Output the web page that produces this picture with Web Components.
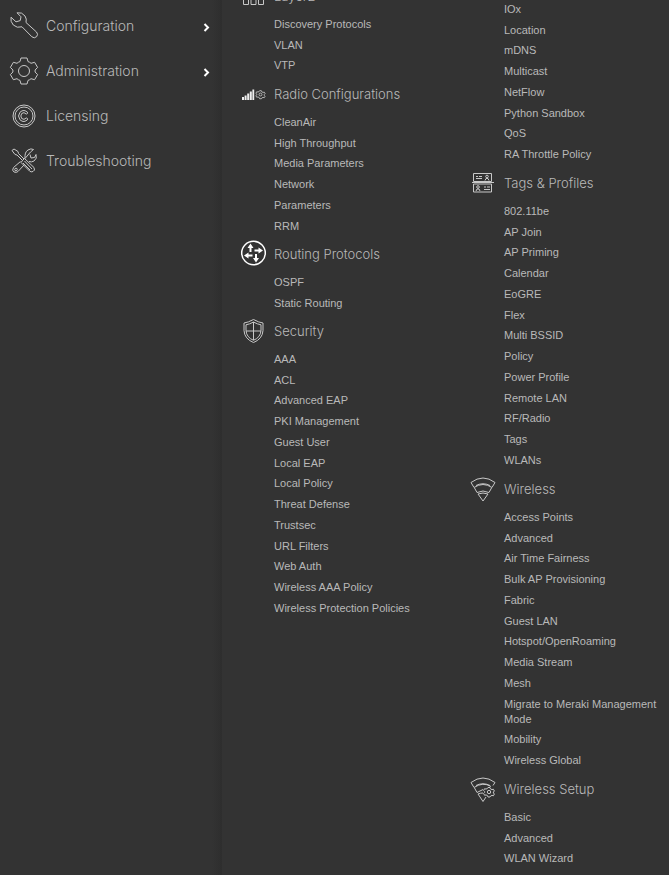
<!DOCTYPE html>
<html lang="en">
<head>
<meta charset="utf-8">
<meta name="viewport" content="width=device-width, initial-scale=1">
<title>Configuration menu</title>
<style>
body{margin:0;background:#333;color:#b9b9b9;font-family:Inter,"Liberation Sans",sans-serif;font-weight:300}
</style>
</head>
<body>
<menu-shell>
  <side-item slot="side" icon="wrench" expandable>Configuration</side-item>
  <side-item slot="side" icon="gear" expandable>Administration</side-item>
  <side-item slot="side" icon="copyright">Licensing</side-item>
  <side-item slot="side" icon="tools">Troubleshooting</side-item>

  <menu-column slot="columns" class="scrolled">
    <menu-group icon="layers" label="Layer2">
      <menu-link>Discovery Protocols</menu-link><menu-link>VLAN</menu-link><menu-link>VTP</menu-link>
    </menu-group>
    <menu-group icon="radio" label="Radio Configurations">
      <menu-link>CleanAir</menu-link><menu-link>High Throughput</menu-link><menu-link>Media Parameters</menu-link><menu-link>Network</menu-link><menu-link>Parameters</menu-link><menu-link>RRM</menu-link>
    </menu-group>
    <menu-group icon="routing" label="Routing Protocols">
      <menu-link>OSPF</menu-link><menu-link>Static Routing</menu-link>
    </menu-group>
    <menu-group icon="shield" label="Security">
      <menu-link>AAA</menu-link><menu-link>ACL</menu-link><menu-link>Advanced EAP</menu-link><menu-link>PKI Management</menu-link><menu-link>Guest User</menu-link><menu-link>Local EAP</menu-link><menu-link>Local Policy</menu-link><menu-link>Threat Defense</menu-link><menu-link>Trustsec</menu-link><menu-link>URL Filters</menu-link><menu-link>Web Auth</menu-link><menu-link>Wireless AAA Policy</menu-link><menu-link>Wireless Protection Policies</menu-link>
    </menu-group>
  </menu-column>

  <menu-column slot="columns">
    <menu-group>
      <menu-link>IOx</menu-link><menu-link>Location</menu-link><menu-link>mDNS</menu-link><menu-link>Multicast</menu-link><menu-link>NetFlow</menu-link><menu-link>Python Sandbox</menu-link><menu-link>QoS</menu-link><menu-link>RA Throttle Policy</menu-link>
    </menu-group>
    <menu-group icon="tags" label="Tags &amp; Profiles">
      <menu-link>802.11be</menu-link><menu-link>AP Join</menu-link><menu-link>AP Priming</menu-link><menu-link>Calendar</menu-link><menu-link>EoGRE</menu-link><menu-link>Flex</menu-link><menu-link>Multi BSSID</menu-link><menu-link>Policy</menu-link><menu-link>Power Profile</menu-link><menu-link>Remote LAN</menu-link><menu-link>RF/Radio</menu-link><menu-link>Tags</menu-link><menu-link>WLANs</menu-link>
    </menu-group>
    <menu-group icon="wireless" label="Wireless">
      <menu-link>Access Points</menu-link><menu-link>Advanced</menu-link><menu-link>Air Time Fairness</menu-link><menu-link>Bulk AP Provisioning</menu-link><menu-link>Fabric</menu-link><menu-link>Guest LAN</menu-link><menu-link>Hotspot/OpenRoaming</menu-link><menu-link>Media Stream</menu-link><menu-link>Mesh</menu-link><menu-link>Migrate to Meraki Management Mode</menu-link><menu-link>Mobility</menu-link><menu-link>Wireless Global</menu-link>
    </menu-group>
    <menu-group icon="setup" label="Wireless Setup">
      <menu-link>Basic</menu-link><menu-link>Advanced</menu-link><menu-link>WLAN Wizard</menu-link>
    </menu-group>
  </menu-column>
</menu-shell>

<script>
const smallGear = (x, y, s = 1) => `<g transform="translate(${x} ${y}) scale(${s})"><path d="M-1-4.5h2l.5 1.4 1.5.7 1.4-.4 1 1.8-1 1 0 1 1 1-1 1.8-1.4-.4-1.5.7L1 5h-2l-.5-1.4-1.5-.7-1.4.4-1-1.8 1-1V-.5l-1-1 1-1.8 1.4.4 1.500-.7Z"/><circle r="1.700"/></g>`;
const ICONS = {
  wrench: '<path d="M7 .8Q12-.2 15 4q2 3 1 6.500l10.500 9.500q2 2.300.2 4.600-2.400 2.300-4.800.2L12 14.800Q7 16.500 3.300 13 .1 9.500 1 5.200L6 9.800 10.200 8.600 11 4.800Z"/>',
  gear: '<path d="M11 1h6l1 3.600q1.800.5 3 1.700l3.600-1 3 5.100-2.500 2.600v2l2.500 2.600-3 5.100-3.600-1q-1.200 1.200-3 1.700L17 27h-6l-1-3.600q-1.800-.5-3-1.700l-3.600 1-3-5.100 2.500-2.600v-2L.400 10.400l3-5.100 3.600 1q1.200-1.200 3-1.700Z"/><circle cx="14" cy="14" r="5.500"/>',
  copyright: '<circle cx="14" cy="14" r="11"/><circle cx="14" cy="14" r="9"/><path d="M18 10.800Q14 6.500 10 10.200 7 14 10 17.800 14 21.500 18 17.200L16.300 15.900Q14 18.500 11.700 16.500 10 14 11.700 11.500 14 9.500 16.300 12.100Z"/>',
  tools: '<path d="M2 3.500L4 2l4 2.500.500 2L14 12l-1.500 1.500L7 8l-2-.500ZM12.500 13.500l2-2 9.500 9q1.500 3-1 4-2 1-3.500-.5L11 15.500ZM14.500 14l7.500 8M13 16l7 7M20 7.500l1 3.500 3.500-.5 1.500-3q1.500 4-2 6.500-2.500 1.500-5 .5M15 11.500Q14.500 5 18 3q3-2 5.500-.5L20.500 5ZM10.500 14.500L3.500 20.500q-2 3 .5 4.500 2.500 1 4-.5l6-6.500"/><circle cx="6" cy="22.500" r="1.300"/>',
  layers: '<path d="M4.500 17.500h5v5h-5ZM12 17.500h5v5h-5ZM19.500 17.500h5v5h-5ZM14.500 17.500V12M7 17.500V14h15v3.500"/>',
  radio: `<g stroke="none" fill="#eee"><path d="M3 17h2v3H3ZM5.600 15.500h2V20h-2ZM8.200 13.500h2V20h-2ZM10.800 11.500h2V20h-2ZM13.400 9.500h1.800V20h-1.800Z"/></g>${smallGear(21.500,14.500,.85)}`,
  routing: '<circle cx="14.500" cy="13" r="11.800" stroke="#fff" stroke-width="1.500"/><g fill="#fff" stroke="none" transform="translate(.5 -1)"><path d="M11 4.500L14 9h-2v4h-2V9H8ZM23.500 11.500L19 14.500v-2h-4v-2h4v-2ZM16.500 23.500L13.500 19h2v-4h2v4h2ZM4.500 16.500L9 13.500v2h4v2H9v2Z"/></g>',
  shield: '<path d="M14.500 2.500Q20 5.500 24 6V13.500Q23.500 22 14.500 25.500 5.500 22 5 13.500V6Q9 5.500 14.500 2.500ZM14.500 5Q18.500 7.300 22 7.800V13.500Q21.500 20.500 14.500 23.300 7.500 20.500 7 13.500V7.800Q10.500 7.300 14.500 5ZM14.500 5v18M7 14h15"/>',
  tags: '<path d="M4.500 4.500h18v8h-18ZM4.500 15h18v8h-18ZM3 13.500H25M7 7.500h2m1 0h3M7 9.500h6M15 18h2m1 0h3M15 20.500h6"/><circle cx="18" cy="7.500" r="1.300"/><path d="M16 11.500l1-2h2l1 2M7 22l1-2h2l1 2"/><circle cx="9" cy="18" r="1.300"/>',
  wireless: '<path d="M2 7.500Q14-1.500 26 7.500L23 12.500Q14 6.500 5 12.500ZM5.500 13L8 17.500Q14 14.500 20 17.500L22.500 13M7 10.500Q14 7 21 10.500M9 19Q14 17 19 19L14 26Z"/>',
  setup: '<path d="M2 7.500Q14-1.500 26 7.500L24 10.500M2 7.500L5 12.500Q14 6.500 22 11.500M7 10.500Q14 7 21 10.500M5.500 13L8 17.500 14 14.500M9 19L14 26.500 17 22M9 19q2.500-1 5-1"/>' + smallGear(20,17)
};

function shadow(host, html) {
  const t = document.createElement('template');
  t.innerHTML = html;
  const root = host.attachShadow({ mode: 'open' });
  root.append(t.content.cloneNode(true));
  return root;
}

customElements.define('menu-icon', class extends HTMLElement {
  constructor() {
    super();
    shadow(this, '<style>:host{display:block;flex:none;width:28px;height:28px}svg{display:block;width:100%;height:100%;overflow:visible;fill:none;stroke:#c8c8c8;stroke-width:1;stroke-linejoin:round}</style><svg viewBox="0 0 28 28" aria-hidden="true"></svg>');
  }
  connectedCallback() {
    this.shadowRoot.querySelector('svg').innerHTML = ICONS[this.getAttribute('name')] || '';
  }
});

customElements.define('menu-link', class extends HTMLElement {
  constructor() {
    super();
    shadow(this, '<style>:host{display:block;padding:3px 0;font:11px/15px "Liberation Sans",Arial,sans-serif}a{display:block;color:inherit;text-decoration:none}a:hover{color:#fff}</style><a href="#"><slot></slot></a>');
  }
});

customElements.define('menu-group', class extends HTMLElement {
  connectedCallback() {
    if (this.shadowRoot) return;
    const label = this.getAttribute('label');
    const root = shadow(this, `<style>
      :host{display:block}
      header{display:flex;align-items:center;gap:7px;height:36px}
      h2{margin:0;font-size:13px;line-height:20px;font-weight:300;white-space:nowrap}
      nav{padding-left:35px}
      ::slotted(:nth-child(4n+2)){padding-bottom:2px}
      </style>${label ? `<header><menu-icon name="${this.getAttribute('icon')}"></menu-icon><h2></h2></header>` : ''}<nav><slot></slot></nav>`);
    if (label) root.querySelector('h2').textContent = label;
  }
});

customElements.define('menu-column', class extends HTMLElement {
  constructor() {
    super();
    shadow(this, '<style>:host{display:block;min-width:0;margin-top:-1px}:host(.scrolled){margin-top:-22px}</style><slot></slot>');
  }
});

customElements.define('side-item', class extends HTMLElement {
  connectedCallback() {
    if (this.shadowRoot) return;
    shadow(this, `<style>
      :host{display:block;font-size:14px;line-height:21px}
      a{display:flex;align-items:center;gap:8px;height:45px;padding:0 12px 0 10px;color:inherit;text-decoration:none}
      span{flex:1}
      svg{width:8px;height:12px;fill:none;stroke:#fff;stroke-width:2}
      </style><a href="#"><menu-icon name="${this.getAttribute('icon')}"></menu-icon><span><slot></slot></span>${this.hasAttribute('expandable') ? '<svg viewBox="0 0 8 12" aria-hidden="true"><path d="M2.500 4L6 7.500 2.500 11"/></svg>' : ''}</a>`);
  }
});

customElements.define('menu-shell', class extends HTMLElement {
  constructor() {
    super();
    shadow(this, `<style>
      :host{display:grid;grid-template-columns:222px minmax(0,1fr);min-height:100vh;overflow:hidden}
      aside{padding-top:3px;background:linear-gradient(to left,#2e2e2e,#333 10px)}
      main{display:grid;grid-template-columns:repeat(2,minmax(0,1fr));align-items:start;gap:30px;padding-left:17px}
      </style><aside><slot name="side"></slot></aside><main><slot name="columns"></slot></main>`);
  }
});
</script>
</body>
</html>
